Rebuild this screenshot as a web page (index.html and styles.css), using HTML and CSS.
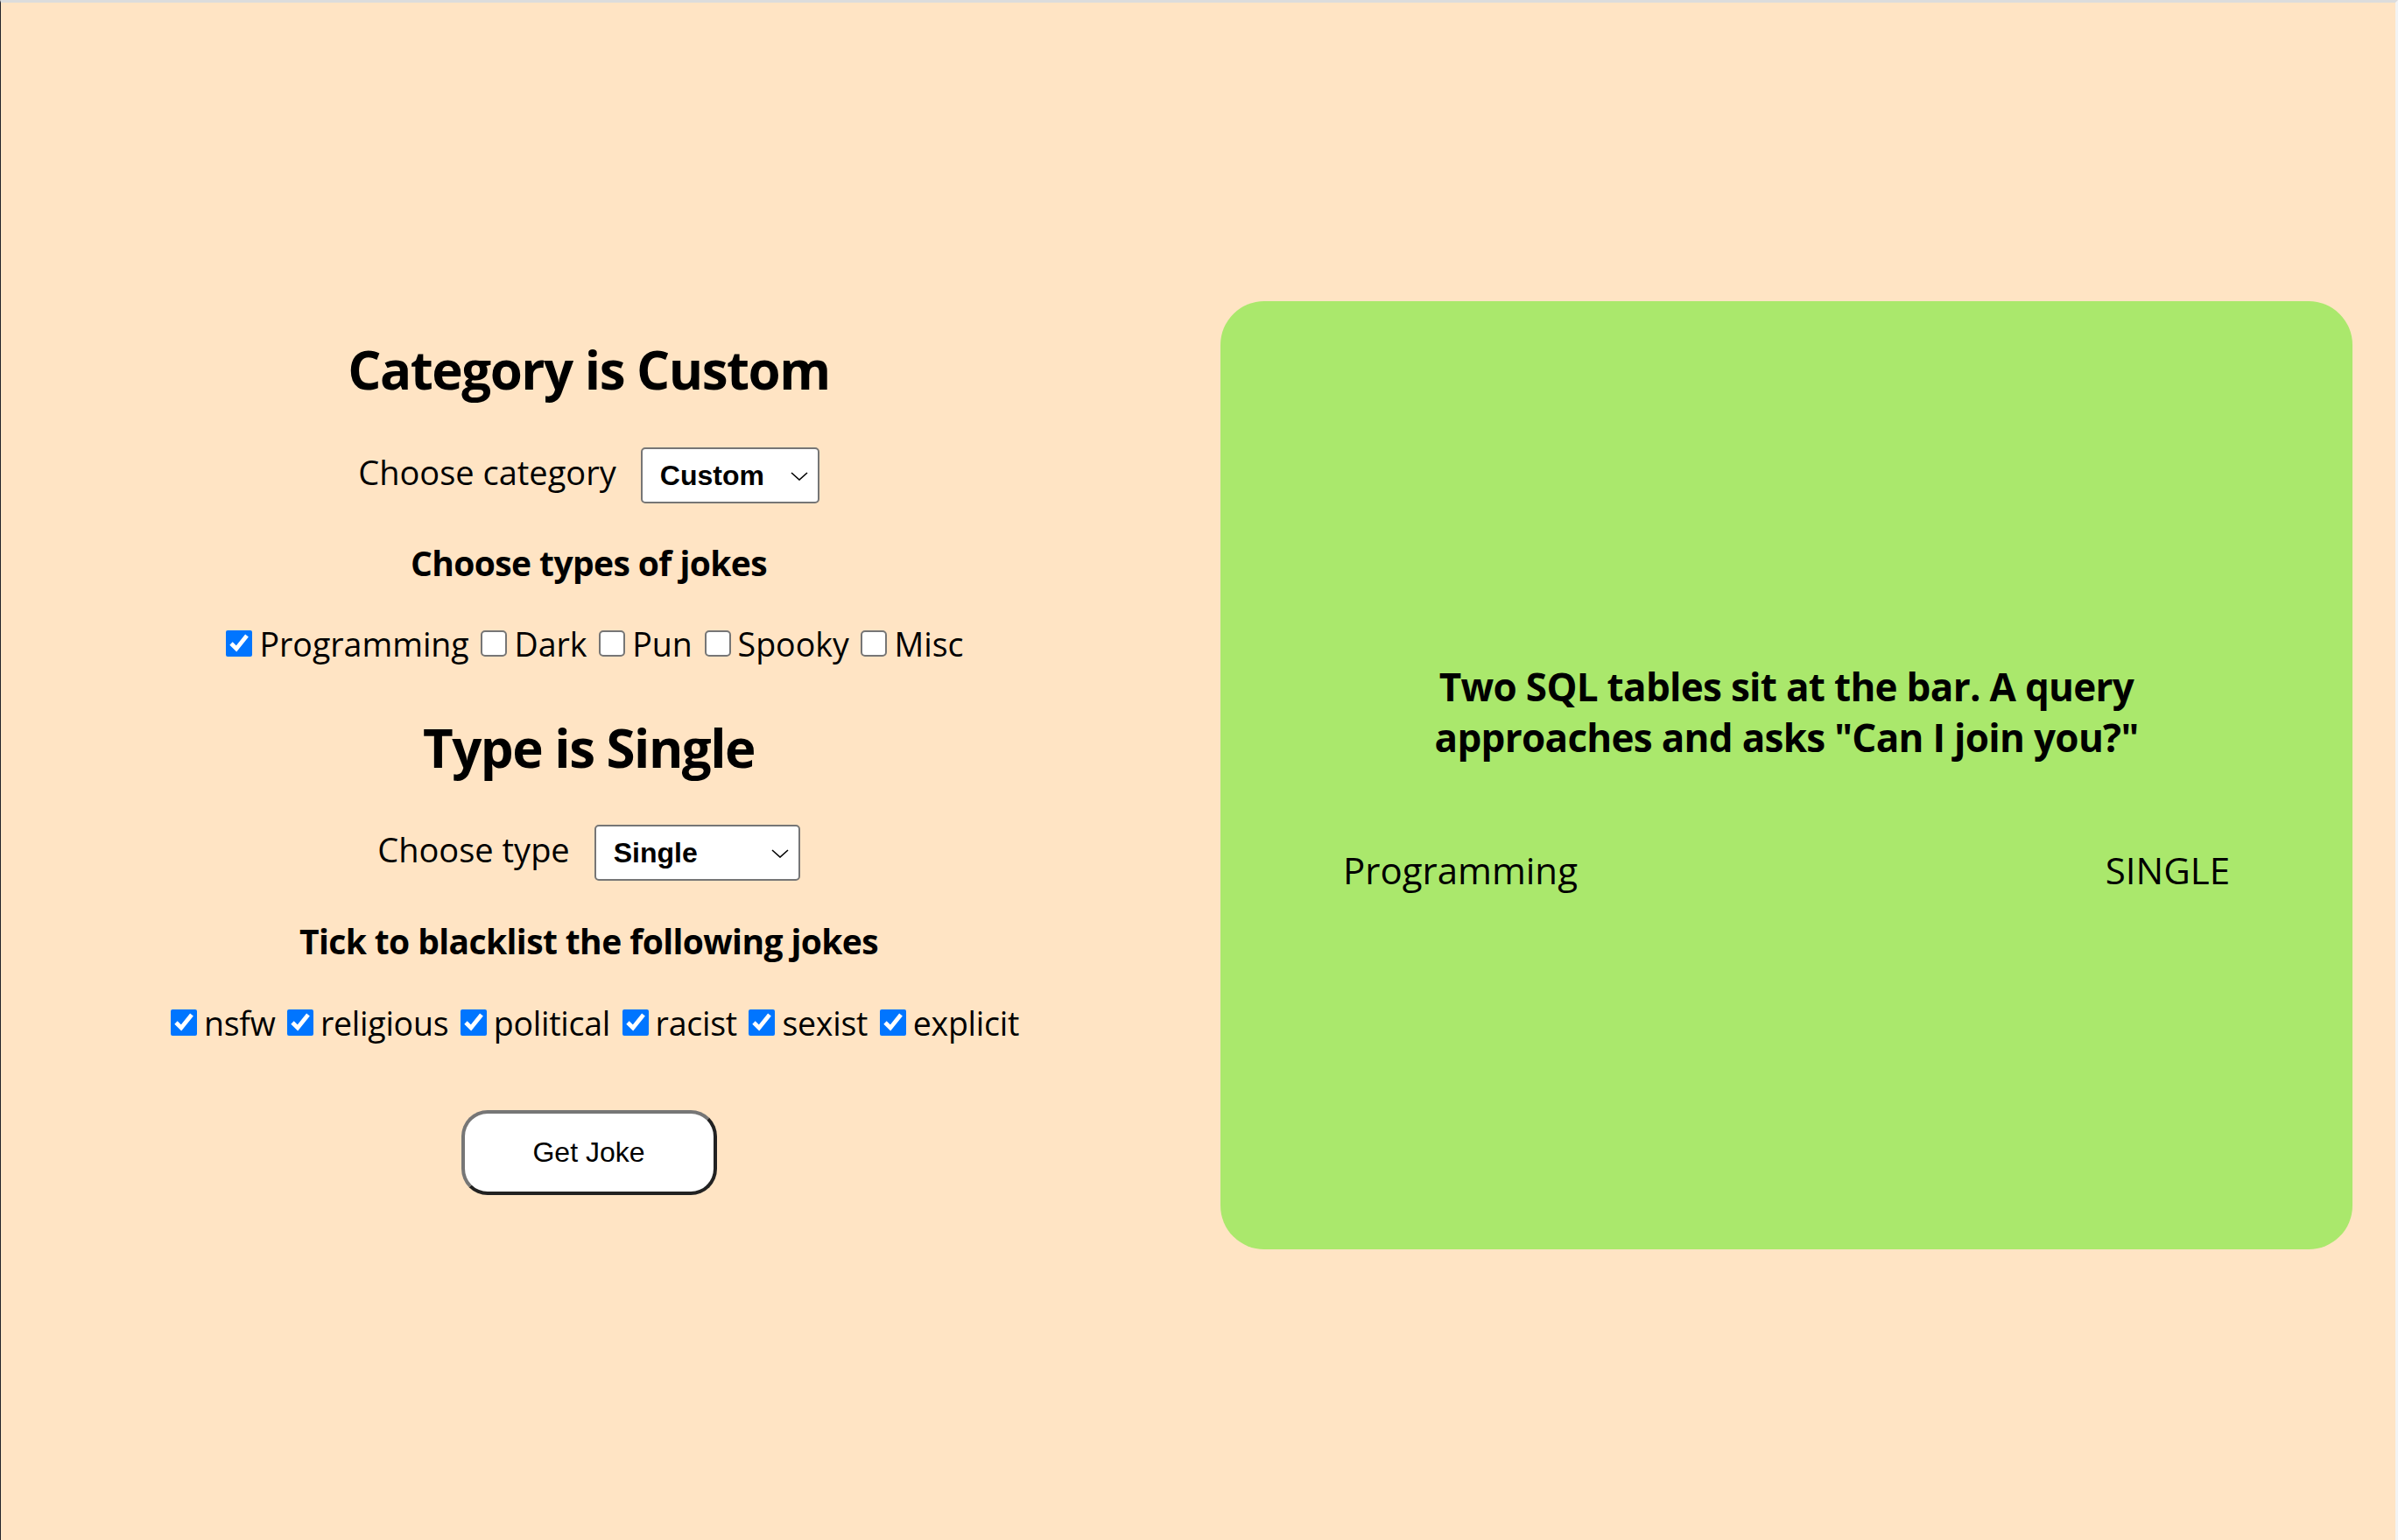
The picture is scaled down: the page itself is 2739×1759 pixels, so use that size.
FILE: index.html
```html
<!DOCTYPE html>
<html lang="en">
<head>
<meta charset="utf-8">
<title>Joke Generator</title>
<link rel="stylesheet" href="styles.css">
</head>
<body>
<div class="page">
  <main class="layout">
    <section class="controls">
      <h2 class="title">Category is Custom</h2>
      <div class="field">
        <label class="field-label" for="category">Choose category</label>
        <span class="select-wrap">
          <select id="category" class="select select-category">
            <option>Any</option>
            <option selected>Custom</option>
          </select>
          <svg class="chevron" viewBox="0 0 20 10" aria-hidden="true"><polyline points="1,1 10,9 19,1"/></svg>
        </span>
      </div>
      <h3 class="subtitle">Choose types of jokes</h3>
      <div class="opts"><label class="opt"><input type="checkbox" checked>Programming</label> <label class="opt"><input type="checkbox">Dark</label> <label class="opt"><input type="checkbox">Pun</label> <label class="opt"><input type="checkbox">Spooky</label> <label class="opt"><input type="checkbox">Misc</label></div>
      <h2 class="title title-type">Type is Single</h2>
      <div class="field field-type">
        <label class="field-label" for="type">Choose type</label>
        <span class="select-wrap">
          <select id="type" class="select select-type">
            <option selected>Single</option>
            <option>Twopart</option>
          </select>
          <svg class="chevron" viewBox="0 0 20 10" aria-hidden="true"><polyline points="1,1 10,9 19,1"/></svg>
        </span>
      </div>
      <h3 class="subtitle subtitle-blacklist">Tick to blacklist the following jokes</h3>
      <div class="opts opts-blacklist"><label class="opt"><input type="checkbox" checked>nsfw</label> <label class="opt"><input type="checkbox" checked>religious</label> <label class="opt"><input type="checkbox" checked>political</label> <label class="opt"><input type="checkbox" checked>racist</label> <label class="opt"><input type="checkbox" checked>sexist</label> <label class="opt"><input type="checkbox" checked>explicit</label></div>
      <button class="get-joke" type="button">Get Joke</button>
    </section>
    <article class="card">
      <p class="joke">Two SQL tables sit at the bar. A query approaches and asks "Can I join you?"</p>
      <div class="card-meta"><span>Programming</span><span>SINGLE</span></div>
    </article>
  </main>
</div>
</body>
</html>
```
FILE: styles.css
```css
html, body {
  margin: 0;
  padding: 0;
}

body {
  background: #ffe4c4;
  font-family: "Open Sans", "Noto Sans", sans-serif;
  color: #000;
}

.page {
  box-sizing: border-box;
  height: 1759px;
  border-top: 3px solid #dcdcdc;
  border-left: 1px solid #24242c;
  border-right: 3px solid #f3f3f3;
  overflow: hidden;
}

.layout {
  display: flex;
  align-items: flex-start;
  padding-top: 341px;
}

.controls {
  width: 1343px;
  flex: none;
  display: flex;
  flex-direction: column;
  align-items: center;
  margin-top: 38px;
}

.title {
  margin: 0;
  font-size: 60px;
  line-height: 80px;
  font-weight: 700;
  letter-spacing: -1.5px;
}

.title-type {
  margin-top: 53px;
}

.field {
  display: flex;
  align-items: baseline;
  gap: 28px;
  margin-top: 49px;
}

.field-type {
  margin-top: 48px;
}

.field-label {
  font-size: 38px;
  line-height: 50px;
}

.select-wrap {
  position: relative;
  display: inline-block;
}

.select {
  -webkit-appearance: none;
  appearance: none;
  box-sizing: border-box;
  height: 64px;
  padding: 0 0 0 20px;
  border: 2px solid #767676;
  border-radius: 5px;
  background: #fff;
  color: #000;
  font-family: "Liberation Sans", Arial, sans-serif;
  font-weight: 700;
  font-size: 32px;
}

.select-category {
  width: 204px;
}

.select-type {
  width: 235px;
}

.chevron {
  position: absolute;
  right: 13px;
  top: 28px;
  width: 20px;
  height: 10px;
  fill: none;
  stroke: #000;
  stroke-width: 1.6;
  pointer-events: none;
}

.subtitle {
  margin: 43px 0 0;
  font-size: 39px;
  line-height: 50px;
  font-weight: 700;
  letter-spacing: -0.6px;
}

.subtitle-blacklist {
  margin-top: 44px;
}

.opts {
  margin-top: 43px;
  padding-left: 10px;
  font-size: 37.5px;
  line-height: 50px;
  white-space: nowrap;
}

.opts-blacklist {
  margin-top: 44px;
  letter-spacing: -0.25px;
}

.opt input {
  box-sizing: border-box;
  width: 30px;
  height: 30px;
  margin: 0 8px 3px 4px;
  accent-color: #0075ff;
  vertical-align: baseline;
}

.opt input:not(:checked) {
  -webkit-appearance: none;
  appearance: none;
  margin-bottom: 0;
  border: 2px solid #767676;
  border-radius: 5px;
  background: #fff;
}

.get-joke {
  box-sizing: border-box;
  width: 292px;
  height: 97px;
  margin-top: 74px;
  border: 4px solid;
  border-color: #767676 #222 #222 #767676;
  border-radius: 30px;
  background: #fff;
  color: #000;
  font-family: "Liberation Sans", Arial, sans-serif;
  font-size: 32px;
}

.card {
  box-sizing: border-box;
  flex: none;
  width: 1293px;
  height: 1083px;
  margin-left: 50px;
  padding: 6px 140px 0;
  border-radius: 50px;
  background: #aae86c;
  display: flex;
  flex-direction: column;
  justify-content: center;
}

.joke {
  margin: 0;
  font-size: 44px;
  line-height: 58px;
  font-weight: 700;
  letter-spacing: -0.7px;
  text-align: center;
}

.card-meta {
  display: flex;
  justify-content: space-between;
  margin-top: 94px;
  font-size: 42px;
  line-height: 58px;
}
```
